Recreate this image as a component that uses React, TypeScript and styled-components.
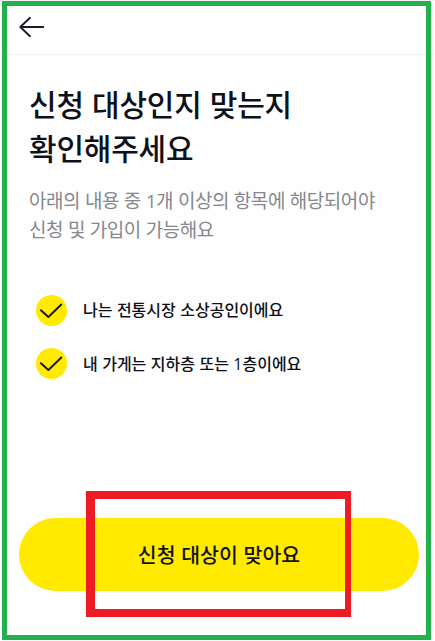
import React from 'react';
import styled, { createGlobalStyle } from 'styled-components';

const GlobalStyle = createGlobalStyle`
  * { box-sizing: border-box; }
  body { margin: 0; background: #fff; }
  h1, p, ul { margin: 0; padding: 0; }
  ul { list-style: none; }
`;

const Screen = styled.main`
  position: relative;
  display: flex;
  flex-direction: column;
  width: 435px;
  height: 641px;
  overflow: hidden;
  background: #fefefe;
  color: #0d1119;
  font-family: 'Open Sans', 'Noto Sans CJK KR', sans-serif;
  border-top: 1px solid #f1f1f3;
`;

const TopBar = styled.header`
  display: flex;
  flex: none;
  align-items: center;
  height: 54px;
  padding: 0 0 1px 18px;
  border-bottom: 1px solid #f1f1f3;
`;

const BackButton = styled.button`
  display: flex;
  padding: 0;
  border: 0;
  background: none;
  color: #1a1c24;
`;

const Content = styled.section`
  flex: 1;
  padding: 28px 28px 0 29px;
`;

const TextLine = styled.span<{ $spacing?: number; $word?: number }>`
  display: block;
  white-space: nowrap;
  letter-spacing: ${(p) => p.$spacing ?? 0}px;
  word-spacing: ${(p) => p.$word ?? 0}px;
`;

const Title = styled.h1`
  font-size: 30px;
  font-weight: 500;
  line-height: 44px;
`;

const Description = styled.p`
  margin-top: 16px;
  color: #85888d;
  font-size: 19px;
  font-weight: 400;
  line-height: 29px;
`;

const Conditions = styled.ul`
  display: flex;
  flex-direction: column;
  gap: 21.5px;
  margin: 49px 0 0 7px;
`;

const Condition = styled.li`
  display: flex;
  align-items: center;
  gap: 16px;
  height: 32px;
  font-size: 16px;
  font-weight: 500;
  line-height: 24px;
`;

const CheckBadge = styled.span`
  display: flex;
  width: 31px;
  height: 31px;
  border-radius: 50%;
  background: #ffea00;
`;

const Footer = styled.footer`
  flex: none;
  padding: 0 16px 50px 19px;
`;

const ConfirmButton = styled.button`
  display: flex;
  align-items: center;
  justify-content: center;
  width: 400px;
  height: 73px;
  padding: 0 0 2px;
  border: 0;
  border-radius: 37px;
  background: #ffea00;
  color: #12130d;
  font: inherit;
  font-size: 20.5px;
  font-weight: 500;
`;

const ScreenOutline = styled.div`
  position: absolute;
  inset: 0 4px 1px 2px;
  border: 5px solid #22b14c;
  pointer-events: none;
`;

const ButtonHighlight = styled.div`
  position: absolute;
  top: 490px;
  left: 86px;
  width: 265px;
  height: 126px;
  border: solid #ed1c24;
  border-width: 8px 6px 8px 9px;
  pointer-events: none;
`;

const conditions = [
  '나는 전통시장 소상공인이에요',
  '내 가게는 지하층 또는 1층이에요',
];

export default function App() {
  return (
    <>
      <GlobalStyle />
      <Screen>
        <TopBar>
          <BackButton aria-label="뒤로">
            <svg width="28" height="24" viewBox="0 0 28 24" fill="none" stroke="currentColor" strokeWidth="1.9" strokeLinecap="round" strokeLinejoin="round">
              <path d="M25.3 12H2.3M12 2.8L2.3 12L12 21.2" />
            </svg>
          </BackButton>
        </TopBar>
        <Content>
          <Title>
            <TextLine $spacing={-0.2} $word={0.6}>신청 대상인지 맞는지</TextLine>
            <TextLine $spacing={-0.2}>확인해주세요</TextLine>
          </Title>
          <Description>
            <TextLine $spacing={-0.44} $word={0.3}>아래의 내용 중 1개 이상의 항목에 해당되어야</TextLine>
            <TextLine $spacing={-0.44} $word={0.3}>신청 및 가입이 가능해요</TextLine>
          </Description>
          <Conditions>
            {conditions.map((text) => (
              <Condition key={text}>
                <CheckBadge>
                  <svg width="31" height="31" viewBox="0 0 31 31" fill="none" stroke="#17180c" strokeWidth="1.9" strokeLinecap="round" strokeLinejoin="round">
                    <path d="M4.9 15.2L12.4 22L25.3 9.5" />
                  </svg>
                </CheckBadge>
                <TextLine $spacing={0} $word={0.3}>{text}</TextLine>
              </Condition>
            ))}
          </Conditions>
        </Content>
        <Footer>
          <ConfirmButton>
            <TextLine $spacing={0.05} $word={0.2}>신청 대상이 맞아요</TextLine>
          </ConfirmButton>
        </Footer>
        <ScreenOutline />
        <ButtonHighlight />
      </Screen>
    </>
  );
}
